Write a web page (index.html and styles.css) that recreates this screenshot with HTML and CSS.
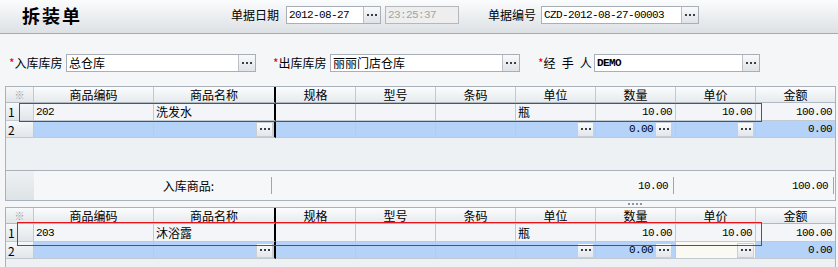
FILE: index.html
```html
<!DOCTYPE html>
<html lang="zh">
<head>
<meta charset="utf-8">
<title>拆装单</title>
<link rel="stylesheet" href="styles.css">
</head>
<body>
<div class="topbar">
  <div class="title">拆装单</div>
  <div class="tfield">
    <span class="tlabel w55">单据日期</span>
    <div class="box w95"><span class="val mono">2012-08-27</span><span class="btn"><svg width="10" height="2" viewBox="0 0 10 2"><rect x="0" y="0" width="2" height="2"/><rect x="4" y="0" width="2" height="2"/><rect x="8" y="0" width="2" height="2"/></svg></span></div>
    <div class="box disabled w74"><span class="val mono">23:25:37</span></div>
  </div>
  <div class="tfield ml29">
    <span class="tlabel w53">单据编号</span>
    <div class="box w158"><span class="val mono">CZD-2012-08-27-00003</span><span class="btn"><svg width="10" height="2" viewBox="0 0 10 2"><rect x="0" y="0" width="2" height="2"/><rect x="4" y="0" width="2" height="2"/><rect x="8" y="0" width="2" height="2"/></svg></span></div>
  </div>
</div>

<div class="formrow">
  <div class="field ml9">
    <span class="flabel w57"><span class="req">*</span>入库库房</span>
    <div class="box w190"><span class="val">总仓库</span><span class="btn"><svg width="10" height="2" viewBox="0 0 10 2"><rect x="0" y="0" width="2" height="2"/><rect x="4" y="0" width="2" height="2"/><rect x="8" y="0" width="2" height="2"/></svg></span></div>
  </div>
  <div class="field ml17">
    <span class="flabel w57"><span class="req">*</span>出库库房</span>
    <div class="box w190"><span class="val">丽丽门店仓库</span><span class="btn"><svg width="10" height="2" viewBox="0 0 10 2"><rect x="0" y="0" width="2" height="2"/><rect x="4" y="0" width="2" height="2"/><rect x="8" y="0" width="2" height="2"/></svg></span></div>
  </div>
  <div class="field ml18">
    <span class="flabel w56"><span class="req">*</span><span class="sp">经</span><span class="sp">手</span>人</span>
    <div class="box w166"><span class="val mono bold">DEMO</span><span class="btn"><svg width="10" height="2" viewBox="0 0 10 2"><rect x="0" y="0" width="2" height="2"/><rect x="4" y="0" width="2" height="2"/><rect x="8" y="0" width="2" height="2"/></svg></span></div>
  </div>
</div>

<div class="grid g1">
  <div class="grow ghead">
    <div class="c rh star">※</div>
    <div class="c">商品编码</div>
    <div class="c thick">商品名称</div>
    <div class="c">规格</div>
    <div class="c">型号</div>
    <div class="c">条码</div>
    <div class="c">单位</div>
    <div class="c">数量</div>
    <div class="c">单价</div>
    <div class="c last">金额</div>
  </div>
  <div class="grow r1">
    <div class="c rh">1</div>
    <div class="c l mono">202</div>
    <div class="c l thick">洗发水</div>
    <div class="c"></div>
    <div class="c"></div>
    <div class="c"></div>
    <div class="c l">瓶</div>
    <div class="c r mono">10.00</div>
    <div class="c r mono">10.00</div>
    <div class="c r mono last">100.00</div>
  </div>
  <div class="grow r2">
    <div class="c rh">2</div>
    <div class="c"></div>
    <div class="c r thick"><span class="cbtn"><svg width="10" height="2" viewBox="0 0 10 2"><rect x="0" y="0" width="2" height="2"/><rect x="4" y="0" width="2" height="2"/><rect x="8" y="0" width="2" height="2"/></svg></span></div>
    <div class="c"></div>
    <div class="c"></div>
    <div class="c"></div>
    <div class="c r"><span class="cbtn"><svg width="10" height="2" viewBox="0 0 10 2"><rect x="0" y="0" width="2" height="2"/><rect x="4" y="0" width="2" height="2"/><rect x="8" y="0" width="2" height="2"/></svg></span></div>
    <div class="c r mono"><span class="num">0.00</span><span class="cbtn"><svg width="10" height="2" viewBox="0 0 10 2"><rect x="0" y="0" width="2" height="2"/><rect x="4" y="0" width="2" height="2"/><rect x="8" y="0" width="2" height="2"/></svg></span></div>
    <div class="c r"><span class="cbtn"><svg width="10" height="2" viewBox="0 0 10 2"><rect x="0" y="0" width="2" height="2"/><rect x="4" y="0" width="2" height="2"/><rect x="8" y="0" width="2" height="2"/></svg></span></div>
    <div class="c r mono pr last">0.00</div>
  </div>
  <div class="gempty"></div>
  <div class="gsum">
    <div class="srh"></div>
    <div class="sc"><span class="stext">入库商品:</span><span class="sep g57"></span></div>
    <div class="sc"><span class="stext mono">10.00</span><span class="sep g5"></span></div>
    <div class="sc"><span class="stext mono">100.00</span><span class="sep g5"></span></div>
    <div></div>
  </div>
  <div class="hl hl1"></div>
</div>

<div class="splitter"><span class="grip"></span></div>

<div class="grid g2">
  <div class="grow ghead">
    <div class="c rh star">※</div>
    <div class="c">商品编码</div>
    <div class="c thick">商品名称</div>
    <div class="c">规格</div>
    <div class="c">型号</div>
    <div class="c">条码</div>
    <div class="c">单位</div>
    <div class="c">数量</div>
    <div class="c">单价</div>
    <div class="c last">金额</div>
  </div>
  <div class="grow r1">
    <div class="c rh">1</div>
    <div class="c l mono">203</div>
    <div class="c l thick">沐浴露</div>
    <div class="c"></div>
    <div class="c"></div>
    <div class="c"></div>
    <div class="c l">瓶</div>
    <div class="c r mono">10.00</div>
    <div class="c r mono">10.00</div>
    <div class="c r mono last">100.00</div>
  </div>
  <div class="grow r2">
    <div class="c rh">2</div>
    <div class="c"></div>
    <div class="c r thick"><span class="cbtn"><svg width="10" height="2" viewBox="0 0 10 2"><rect x="0" y="0" width="2" height="2"/><rect x="4" y="0" width="2" height="2"/><rect x="8" y="0" width="2" height="2"/></svg></span></div>
    <div class="c"></div>
    <div class="c"></div>
    <div class="c"></div>
    <div class="c r"><span class="cbtn"><svg width="10" height="2" viewBox="0 0 10 2"><rect x="0" y="0" width="2" height="2"/><rect x="4" y="0" width="2" height="2"/><rect x="8" y="0" width="2" height="2"/></svg></span></div>
    <div class="c r mono"><span class="num">0.00</span><span class="cbtn"><svg width="10" height="2" viewBox="0 0 10 2"><rect x="0" y="0" width="2" height="2"/><rect x="4" y="0" width="2" height="2"/><rect x="8" y="0" width="2" height="2"/></svg></span></div>
    <div class="c r edit"><span class="cbtn"><svg width="10" height="2" viewBox="0 0 10 2"><rect x="0" y="0" width="2" height="2"/><rect x="4" y="0" width="2" height="2"/><rect x="8" y="0" width="2" height="2"/></svg></span></div>
    <div class="c r mono pr last">0.00</div>
  </div>
  <div class="gempty"></div>
  <div class="hl hl2"></div>
</div>
</body>
</html>
```

FILE: styles.css
```css
* { box-sizing: border-box; margin: 0; padding: 0; }
html, body { width: 838px; height: 267px; overflow: hidden; }
body {
  background: #f4f6f8;
  font-family: "Noto Sans CJK SC", "Liberation Sans", sans-serif;
  font-size: 12px;
  color: #000;
}
.mono { font-family: "Liberation Mono", "DejaVu Sans Mono", monospace; font-size: 11px; letter-spacing: -0.6px; }
.bold { font-weight: bold; }

/* top bar */
.topbar {
  height: 34px;
  border-bottom: 1px solid #a3abb3;
  background: linear-gradient(#fbfcfd, #dce1e5);
  display: flex;
  align-items: flex-start;
  padding: 6px 0 0 22px;
}
.title {
  width: 209px;
  font-size: 18px;
  line-height: 18px;
  font-weight: bold;
  letter-spacing: 2px;
}
.tfield { display: flex; align-items: center; }
.tlabel, .flabel { line-height: 18px; white-space: nowrap; }
.ml29 { margin-left: 29px; }
.w55 { width: 55px; }
.w53 { width: 53px; }
.w57 { width: 57px; }
.w56 { width: 56px; }
.w95 { width: 95px; }
.w74 { width: 74px; margin-left: 4px; }
.w158 { width: 158px; }
.w190 { width: 190px; }
.w166 { width: 166px; }

.box {
  display: flex;
  height: 18px;
  border: 1px solid #a8afb7;
  background: #fff;
}
.box .val {
  flex: 1;
  padding-left: 2px;
  line-height: 16px;
  white-space: nowrap;
  overflow: hidden;
}
.box.disabled { background: #eeeeee; border-color: #b4b8bc; color: #a4a4a4; }
.btn {
  width: 17px;
  border-left: 1px solid #b9c0c7;
  background: linear-gradient(#f8f9fa, #e0e4e8);
  display: flex;
  align-items: center;
  justify-content: center;
}
.btn svg, .cbtn svg { fill: #3a3f44; display: block; }

/* form row */
.formrow { display: flex; padding-top: 20px; height: 38px; }
.field { display: flex; align-items: center; height: 18px; }
.ml9 { margin-left: 9px; }
.ml17 { margin-left: 17px; }
.ml18 { margin-left: 18px; }
.req { color: #e60000; }
.sp { margin-right: 6px; }

/* grids */
.grid {
  position: relative;
  margin-left: 5px;
  width: 831px;
  border: 1px solid #a9b2bb;
  background: #eef1f4;
  display: flex;
  flex-direction: column;
}
.g1 { margin-top: 14px; height: 115px; }
.g2 { height: 70px; border-bottom: none; }
.grow {
  display: grid;
  grid-template-columns: 28px 120px 122px repeat(6, 80px) 79px;
}
.c {
  border-right: 1px solid #c2c9d0;
  border-bottom: 1px solid #c2c9d0;
  display: flex;
  align-items: center;
  justify-content: center;
  white-space: nowrap;
  overflow: hidden;
}
.c.thick { border-right: 2px solid #000; }
.c.last { border-right: none; }
.c.l { justify-content: flex-start; padding-left: 2px; }
.c.r { justify-content: flex-end; padding-right: 1px; }
.c.r.mono { padding-right: 3px; }
.c.pr { padding-right: 3px; }
.ghead .c { height: 16px; background: linear-gradient(#fbfcfd, #e6eaee); border-bottom-color: #b1b9c1; }
.r1 .c { height: 18px; background: #f3f5f8; }
.r2 .c { height: 17px; background: #b5d3f8; }
.grow .c.rh {
  justify-content: flex-start;
  padding-left: 2px;
  background: linear-gradient(#f6f8f9, #e1e6ea);
}
.ghead .c.rh.star { justify-content: center; padding-left: 0; color: #9aa0a6; font-size: 10px; }
.r2 .c.edit { background: #fbfaf2; }
.r2 .c.mono .num { margin-right: 2px; }
.cbtn {
  width: 17px;
  height: 15px;
  border: 1px solid #c9cfd5;
  background: linear-gradient(#fafbfc, #e3e7eb);
  display: flex;
  align-items: center;
  justify-content: center;
  letter-spacing: 0;
}
.gempty { flex: 1; }

.gsum {
  height: 30px;
  border-top: 1px solid #a9b2bb;
  background: #f5f7f9;
  display: grid;
  grid-template-columns: 28px 238px 402px 160px 1fr;
}
.srh { background: linear-gradient(#eef1f3, #dde3e6); }
.sc { display: flex; align-items: center; justify-content: flex-end; }
.sep { width: 1px; height: 17px; background: #9ea7b0; }
.g57 { margin-left: 57px; }
.g5 { margin-left: 5px; }

.splitter { height: 6px; padding: 2px 0 0 628px; display: flex; }
.grip {
  width: 14px;
  height: 2px;
  background: repeating-linear-gradient(90deg, #8d969f 0 2px, transparent 2px 4px);
}

/* highlight annotations */
.hl { position: absolute; border: 1px solid #e8141a; pointer-events: none; }
.hl1 { left: 13px; top: 16px; width: 743px; height: 19px; }
.hl2 { left: 11px; top: 14px; width: 745px; height: 24px; }
```
